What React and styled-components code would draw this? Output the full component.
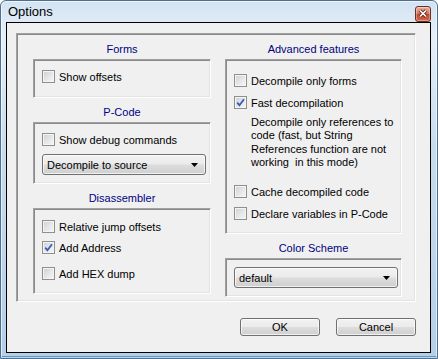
import React from "react"
import styled, { createGlobalStyle } from 'styled-components'

const GlobalStyle = createGlobalStyle`
  html, body {
    margin: 0;
    padding: 0;
    background: #ffffff;
  }
  * {
    box-sizing: border-box;
  }
`

const Janela = styled.div`
  width: 438px;
  height: 359px;
  display: flex;
  flex-direction: column;
  border: 1px solid #4f6f8c;
  border-radius: 6px 6px 0 0;
  padding: 0 6px 5px 5px;
  background: linear-gradient(180deg, #d3e3f2 0%, #e6eff8 10%, #c9dcee 40%, #b4cfe7 100%);
  box-shadow: inset 0 0 0 1px rgba(255, 255, 255, 0.6), inset 0 -2px 0 #5d9ac4;
  overflow: hidden;
`

const BarraTitulo = styled.div`
  height: 21px;
  display: flex;
  align-items: center;
  justify-content: space-between;
  padding-left: 2px;
  font-family: "Liberation Sans", Arial, sans-serif;
  font-size: 13px;
  color: #000000;
`

const BotaoFechar = styled.div`
  width: 16px;
  height: 16px;
  margin-top: 4px;
  border: 1px solid #6b3024;
  border-radius: 3px;
  background: linear-gradient(180deg, #eab3a4 0%, #d9775d 45%, #c4462a 55%, #d2694d 100%);
  display: flex;
  align-items: center;
  justify-content: center;
  box-shadow: inset 0 0 0 1px rgba(255, 255, 255, 0.35);
`

const AreaCliente = styled.div`
  flex: 1;
  border: 1px solid #000000;
  background: #f0f0f0;
  padding: 10px 14px 0 9px;
  display: flex;
  flex-direction: column;
  font-family: "Liberation Sans", Arial, sans-serif;
  font-size: 11px;
  color: #000000;
`

const PainelAfundado = styled.div`
  display: grid;
  grid-template-columns: 178px 177px;
  column-gap: 14px;
  padding: 8px 12px 4px 16px;
  border: 1px solid;
  border-color: #a0a0a0 #ffffff #ffffff #a0a0a0;
  box-shadow: inset 1px 1px 0 #8a8a8a, inset -1px -1px 0 #e3e3e3;
`

const Coluna = styled.div`
  display: flex;
  flex-direction: column;
`

const TituloSecao = styled.div`
  text-align: center;
  line-height: 14px;
  height: 14px;
  margin-top: ${(props) => (props.primeiro ? '0' : '7px')};
  margin-bottom: 3px;
  color: #000080;
`

const Grupo = styled.div`
  display: flex;
  flex-direction: column;
  border: 1px solid;
  border-color: #a0a0a0 #ffffff #ffffff #a0a0a0;
  box-shadow: inset 1px 1px 0 #8a8a8a, inset -1px -1px 0 #e3e3e3;
  padding: ${(props) => props.padding || '10px 4px 8px 8px'};
`

const Linha = styled.div`
  display: flex;
  align-items: center;
  height: 13px;
  margin-top: ${(props) => props.topo || '0'};
  white-space: nowrap;
`

const Caixa = styled.span`
  width: 13px;
  height: 13px;
  flex: none;
  margin-right: 4px;
  border: 1px solid #8e8f8f;
  background: linear-gradient(135deg, #cbcfd5 0%, #e6e7e9 55%, #f7f7f7 100%);
  box-shadow: inset 0 0 0 1px #f4f4f4;
  display: flex;
  align-items: center;
  justify-content: center;
`

const Descricao = styled.div`
  margin-top: 7px;
  padding-left: 17px;
  line-height: 13.3px;
  height: 53px;
`

const Combo = styled.div`
  height: 21px;
  margin-top: ${(props) => props.topo || '0'};
  display: flex;
  align-items: center;
  justify-content: space-between;
  padding: 0 7px 0 4px;
  border: 1px solid #707070;
  border-radius: 3px;
  background: linear-gradient(180deg, #f2f2f2 0%, #ebebeb 48%, #dddddd 52%, #cfcfcf 100%);
  box-shadow: inset 0 0 0 1px rgba(255, 255, 255, 0.7);
`

const LinhaBotoes = styled.div`
  display: flex;
  justify-content: flex-end;
  gap: 16px;
  margin-top: 16px;
`

const Botao = styled.div`
  width: 80px;
  height: 18px;
  display: flex;
  align-items: center;
  justify-content: center;
  border: 1px solid #707070;
  border-radius: 3px;
  background: linear-gradient(180deg, #f2f2f2 0%, #ebebeb 48%, #dddddd 52%, #cfcfcf 100%);
  box-shadow: inset 0 0 0 1px rgba(255, 255, 255, 0.7);
`

const Check = ({ marcado }) => (
  <Caixa>
    {marcado && (
      <svg width="9" height="9" viewBox="0 0 9 9">
        <path d="M1.2 4.6 L3.4 7.2 L8 1.2" fill="none" stroke="#3a5fae" strokeWidth="1.8" />
      </svg>
    )}
  </Caixa>
)

const Opcao = ({ texto, marcado, topo }) => (
  <Linha topo={topo}>
    <Check marcado={marcado} />
    <span>{texto}</span>
  </Linha>
)

const Seta = () => (
  <svg width="7" height="4" viewBox="0 0 7 4">
    <polygon points="0,0 7,0 3.5,4" fill="#000000" />
  </svg>
)

export default function App() {
  return (
    <>
      <GlobalStyle />
      <Janela>
        <BarraTitulo>
          <span>Options</span>
          <BotaoFechar>
            <svg width="10" height="9" viewBox="0 0 10 9">
              <path d="M2 1.5 L8 7.5 M8 1.5 L2 7.5" stroke="#5a2418" strokeWidth="3.2" />
              <path d="M2 1.5 L8 7.5 M8 1.5 L2 7.5" stroke="#ffffff" strokeWidth="1.7" />
            </svg>
          </BotaoFechar>
        </BarraTitulo>
        <AreaCliente>
          <PainelAfundado>
            <Coluna>
              <TituloSecao primeiro>Forms</TituloSecao>
              <Grupo padding="10px 4px 14px 8px">
                <Opcao texto="Show offsets" />
              </Grupo>
              <TituloSecao>P-Code</TituloSecao>
              <Grupo padding="10px 4px 8px 8px">
                <Opcao texto="Show debug commands" />
                <Combo topo="8px">
                  <span>Decompile to source</span>
                  <Seta />
                </Combo>
              </Grupo>
              <TituloSecao>Disassembler</TituloSecao>
              <Grupo padding="11px 4px 13px 8px">
                <Opcao texto="Relative jump offsets" />
                <Opcao texto="Add Address" marcado topo="8px" />
                <Opcao texto="Add HEX dump" topo="13px" />
              </Grupo>
            </Coluna>
            <Coluna>
              <TituloSecao primeiro>Advanced features</TituloSecao>
              <Grupo padding="14px 4px 13px 8px">
                <Opcao texto="Decompile only forms" />
                <Opcao texto="Fast decompilation" marcado topo="9px" />
                <Descricao>
                  Decompile only references to<br />
                  code (fast, but String<br />
                  References function are not<br />
                  working&nbsp; in this mode)
                </Descricao>
                <Opcao texto="Cache decompiled code" topo="16px" />
                <Opcao texto="Declare variables in P-Code" topo="9px" />
              </Grupo>
              <TituloSecao>Color Scheme</TituloSecao>
              <Grupo padding="8px 3px 8px 8px">
                <Combo>
                  <span>default</span>
                  <Seta />
                </Combo>
              </Grupo>
            </Coluna>
          </PainelAfundado>
          <LinhaBotoes>
            <Botao>OK</Botao>
            <Botao>Cancel</Botao>
          </LinhaBotoes>
        </AreaCliente>
      </Janela>
    </>
  )
}
